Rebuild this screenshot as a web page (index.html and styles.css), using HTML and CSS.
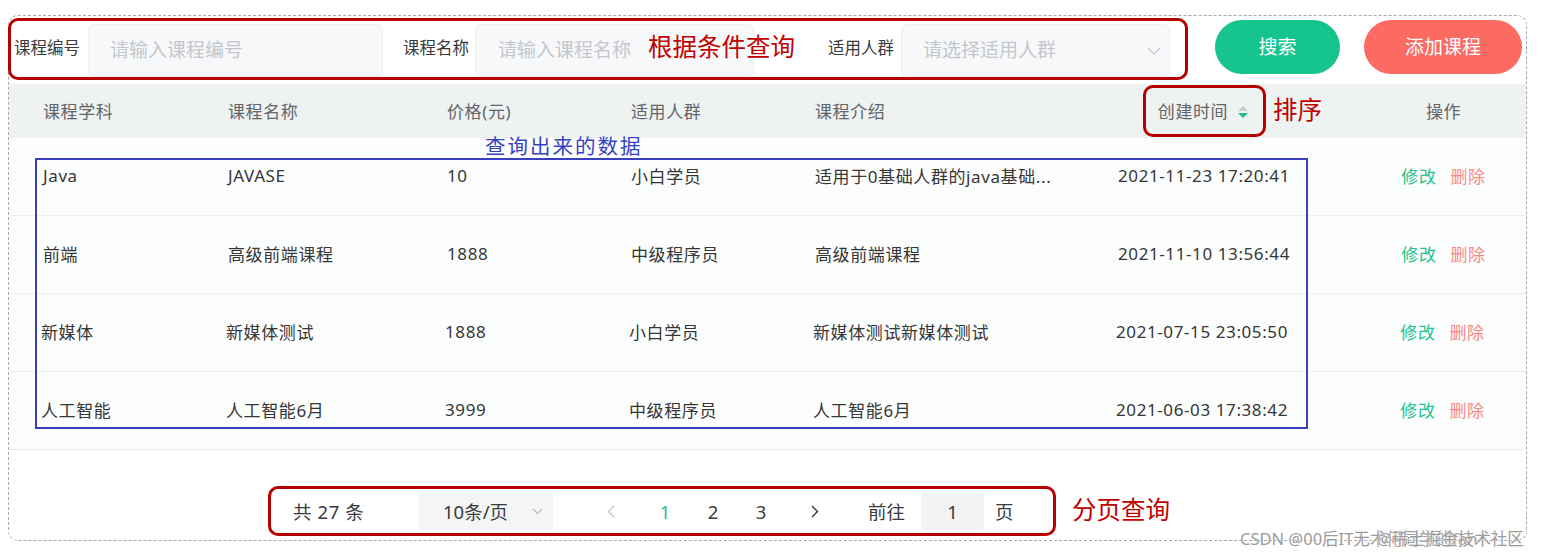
FILE: index.html
```html
<!DOCTYPE html>
<html lang="zh-CN">
<head>
<meta charset="utf-8">
<title>课程管理</title>
<link rel="stylesheet" href="styles.css">
</head>
<body>
<div class="frame">
  <div class="toolbar">
    <div class="query">
      <span class="q-label">课程编号</span>
      <div class="q-input w1"><span class="ph">请输入课程编号</span></div>
      <span class="q-label l2">课程名称</span>
      <div class="q-input w2"><span class="ph">请输入课程名称</span></div>
      <span class="q-label l3">适用人群</span>
      <div class="q-input w3 select"><span class="ph">请选择适用人群</span>
        <svg class="chev" width="14" height="8" viewBox="0 0 14 8"><polyline points="1,1 7,7 13,1" fill="none" stroke="#c6c9cf" stroke-width="1.2"/></svg>
      </div>
    </div>
    <button class="btn btn-search">搜索</button>
    <button class="btn btn-add">添加课程</button>
  </div>

  <div class="table">
    <div class="tr thead">
      <div class="td">课程学科</div>
      <div class="td">课程名称</div>
      <div class="td">价格(元)</div>
      <div class="td">适用人群</div>
      <div class="td">课程介绍</div>
      <div class="td c">创建时间<svg class="sort" width="14" height="16" viewBox="0 0 14 16"><polygon points="2,7 7,2 12,7" fill="#c8cdd2"/><polygon points="2,9 12,9 7,14" fill="#1dbf8b"/></svg></div>
      <div class="td c ops">操作</div>
    </div>
    <div class="tr">
      <div class="td">Java</div>
      <div class="td">JAVASE</div>
      <div class="td">10</div>
      <div class="td">小白学员</div>
      <div class="td">适用于0基础人群的java基础...</div>
      <div class="td c">2021-11-23 17:20:41</div>
      <div class="td c ops"><span class="edit">修改</span><span class="del">删除</span></div>
    </div>
    <div class="tr">
      <div class="td">前端</div>
      <div class="td">高级前端课程</div>
      <div class="td">1888</div>
      <div class="td">中级程序员</div>
      <div class="td">高级前端课程</div>
      <div class="td c">2021-11-10 13:56:44</div>
      <div class="td c ops"><span class="edit">修改</span><span class="del">删除</span></div>
    </div>
    <div class="tr shift">
      <div class="td">新媒体</div>
      <div class="td">新媒体测试</div>
      <div class="td">1888</div>
      <div class="td">小白学员</div>
      <div class="td">新媒体测试新媒体测试</div>
      <div class="td c">2021-07-15 23:05:50</div>
      <div class="td c ops"><span class="edit">修改</span><span class="del">删除</span></div>
    </div>
    <div class="tr shift">
      <div class="td">人工智能</div>
      <div class="td">人工智能6月</div>
      <div class="td">3999</div>
      <div class="td">中级程序员</div>
      <div class="td">人工智能6月</div>
      <div class="td c">2021-06-03 17:38:42</div>
      <div class="td c ops"><span class="edit">修改</span><span class="del">删除</span></div>
    </div>
  </div>

  <div class="pager">
    <span class="pg-total">共 27 条</span>
    <div class="pg-size"><span>10条/页</span>
      <svg width="11" height="7" viewBox="0 0 11 7"><polyline points="1,1 5.5,5.5 10,1" fill="none" stroke="#b8bcc2" stroke-width="1.2"/></svg>
    </div>
    <span class="pg-btn pg-prev"><svg width="8" height="13" viewBox="0 0 8 13"><polyline points="7,1 1.5,6.5 7,12" fill="none" stroke="#c0c4cc" stroke-width="1.4"/></svg></span>
    <span class="pg-btn pg-num active">1</span>
    <span class="pg-btn pg-num">2</span>
    <span class="pg-btn pg-num">3</span>
    <span class="pg-btn pg-next"><svg width="8" height="13" viewBox="0 0 8 13"><polyline points="1,1 6.5,6.5 1,12" fill="none" stroke="#333" stroke-width="1.4"/></svg></span>
    <span class="pg-goto">前往</span>
    <div class="pg-input">1</div>
    <span class="pg-unit">页</span>
  </div>

  <span class="ann ann-query">根据条件查询</span>
  <div class="ann-box ann-sort"></div>
  <span class="ann ann-sort-text">排序</span>
  <span class="ann-blue-text">查询出来的数据</span>
  <div class="ann-blue"></div>
  <span class="ann ann-page">分页查询</span>
</div>
<div class="watermark">
  <span class="wm1">CSDN @00后IT无术何同学的fan</span>
  <span class="wm2">@稀土掘金技术社区</span>
</div>
</body>
</html>
```
FILE: styles.css
```css
* { box-sizing: border-box; }
html, body { margin: 0; padding: 0; background: #fff; }
body {
  font-family: "Noto Sans", "Noto Sans CJK SC", sans-serif;
  color: #3d3d3d;
  width: 1542px;
  height: 558px;
  overflow: hidden;
  position: relative;
}
.frame {
  position: relative;
  margin: 15px 0 0 8px;
  width: 1519px;
  height: 526px;
  border: 1px dashed #a9a9a9;
  border-radius: 10px;
}
.toolbar {
  display: flex;
  align-items: flex-start;
}
.query {
  margin: 2px 0 0 -1px;
  width: 1180px;
  height: 62px;
  border: 3px solid #b60000;
  border-radius: 10px;
  padding-left: 3px;
  display: flex;
  align-items: flex-end;
}
.q-label {
  align-self: center;
  font-size: 16.5px;
  color: #3a3a3a;
  line-height: 1;
  white-space: nowrap;
  margin-top: -2px;
}
.l2 { margin-left: 20px; }
.l3 { margin-left: 74px; }
.q-input {
  height: 53px;
  background: #f7f8fa;
  border: 1px solid #eff0f2;
  border-radius: 6px;
  display: flex;
  align-items: center;
  padding-left: 21px;
}
.w1 { width: 295px; margin-left: 8px; }
.w2 { width: 279px; margin-left: 6px; padding-left: 22px; }
.w3 { width: 269px; margin-left: 7px; padding-left: 21px; justify-content: space-between; padding-right: 8px; }
.ph {
  font-size: 19px;
  color: #c3c6cc;
  white-space: nowrap;
  margin-top: -4px;
}
.btn {
  margin-top: 4px;
  height: 54px;
  border: none;
  border-radius: 27px;
  color: #fff;
  font-family: "Noto Sans CJK SC", sans-serif;
  font-size: 19px;
  padding: 0 0 4px;
}
.btn-search { margin-left: 27px; width: 125px; background: #16c58e; }
.btn-add { margin-left: 24px; width: 158px; background: #fc6b62; }

.table { margin-top: 4px; width: 100%; }
.tr {
  display: grid;
  grid-template-columns: 185px 219px 184px 184px 279px 248px 1fr;
  align-items: center;
  padding-left: 20px;
  height: 78px;
  border-bottom: 1px solid #ebeef2;
  background: #fcfdfd;
  font-size: 17px;
  letter-spacing: 0.6px;
  color: #363636;
}
.tr.shift { padding-left: 18px; }
.thead {
  height: 54px;
  background: #eef2f1;
  border-bottom: none;
  color: #626569;
}
.td { padding-left: 14px; white-space: nowrap; padding-bottom: 2px; }
.td.c { padding-left: 0; text-align: center; display: flex; justify-content: center; align-items: center; }
.td.ops { padding-left: 33px; }
.sort { margin-left: 8px; margin-top: 3px; }
.edit { color: #25c38e; }
.del { color: #f88a85; margin-left: 14px; }

.pager {
  margin: 36px 0 0 259px;
  width: 788px;
  height: 50px;
  border: 3px solid #b60000;
  border-radius: 10px;
  display: flex;
  align-items: center;
  padding-left: 22px;
  font-size: 18.5px;
  color: #3a3a3a;
}
.pg-total { width: 125px; white-space: nowrap; letter-spacing: 0.6px; }
.pg-size {
  width: 135px;
  height: 37px;
  background: #f4f5f5;
  border-radius: 4px;
  display: flex;
  align-items: center;
  justify-content: space-between;
  padding: 0 10px 0 25px;
}
.pg-btn { width: 48px; display: flex; justify-content: center; align-items: center; }
.pg-prev { margin-left: 34px; }
.pg-prev + .pg-num { margin-left: 6px; }
.pg-next { margin-left: 6px; }
.pg-num.active { color: #27c08e; }
.pg-goto { margin-left: 29px; }
.pg-input {
  margin-left: 16px;
  width: 63px;
  height: 37px;
  background: #f2f3f3;
  border-radius: 4px;
  display: flex;
  align-items: center;
  justify-content: center;
}
.pg-unit { margin-left: 11px; }

.ann {
  position: absolute;
  font-family: "Noto Sans CJK SC", sans-serif;
  font-size: 24.5px;
  line-height: 25px;
  color: #c00000;
  white-space: nowrap;
}
.ann-query { left: 639px; top: 17px; }
.ann-sort-text { left: 1264px; top: 80px; }
.ann-page { left: 1063px; top: 480px; }
.ann-box {
  position: absolute;
  border: 3px solid #b60000;
  border-radius: 10px;
}
.ann-sort { left: 1134px; top: 69px; width: 123px; height: 52px; }
.ann-blue {
  position: absolute;
  left: 26px;
  top: 142px;
  width: 1273px;
  height: 271px;
  border: 2px solid #3a3fbd;
}
.ann-blue-text {
  position: absolute;
  left: 476px;
  top: 118px;
  font-family: "Noto Sans CJK SC", sans-serif;
  font-size: 20.5px;
  line-height: 22px;
  letter-spacing: 2px;
  color: #3442c4;
  white-space: nowrap;
}
.watermark {
  position: absolute;
  left: 0;
  top: 0;
  width: 100%;
  height: 100%;
  pointer-events: none;
}
.wm1, .wm2 {
  position: absolute;
  top: 529px;
  font-family: "Noto Sans", "Noto Sans CJK SC", sans-serif;
  font-size: 16.5px;
  line-height: 20px;
  color: #9b9b9b;
  white-space: nowrap;
  text-shadow: 0 0 1px #fff, 0 0 1px #fff;
}
.wm1 { left: 1240px; }
.wm2 { left: 1377px; }
```
